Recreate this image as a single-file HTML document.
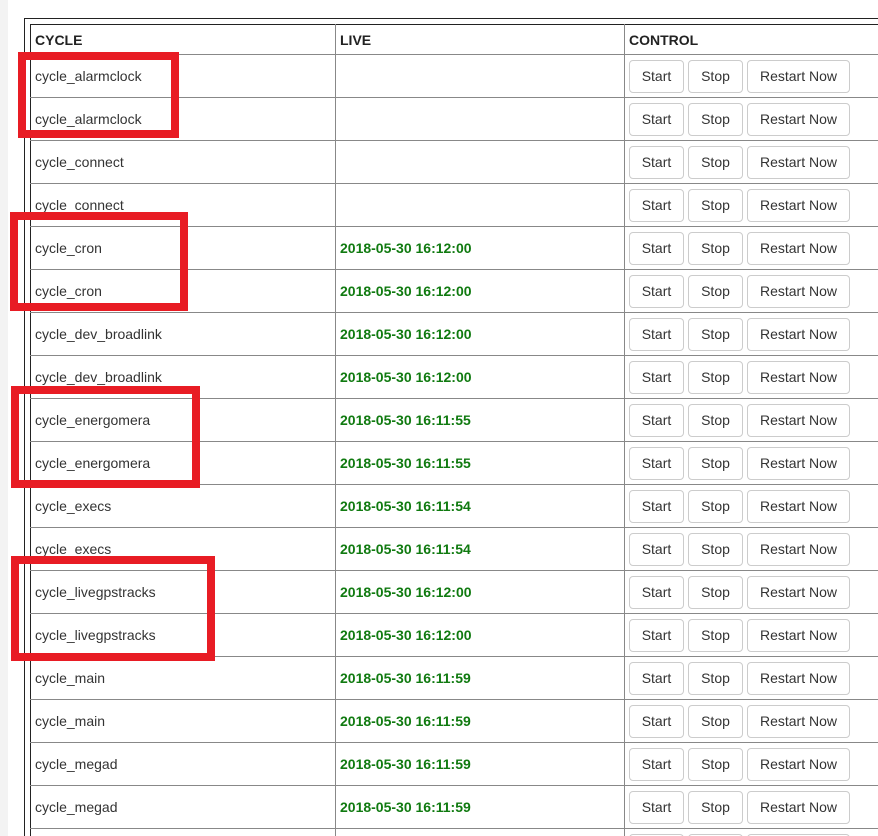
<!DOCTYPE html>
<html style="height:836px;overflow:hidden"><head><style>
body{margin:0;width:878px;height:836px;overflow:hidden;background:#fff;font-family:"Liberation Sans",Arial,sans-serif;font-size:14px;color:#333;position:relative}
.strip{position:absolute;left:0;top:0;width:8px;height:836px;background:#f3f3f3}
.outer{position:absolute;left:24px;top:18px;width:900px;height:900px;border-left:1px solid #222;border-top:1px solid #222}
table{position:absolute;left:30px;top:24px;border-collapse:collapse;width:900px;border-left:1px solid #222;border-top:1px solid #222}
td,th{border-bottom:1px solid #888;border-right:1px solid #888;padding:0 4px;height:42px;text-align:left;vertical-align:middle}
th{height:29px;font-weight:bold;font-size:14px;color:#222}
td.c1,th.c1{width:296px}
td.c2,th.c2{width:280px}
.d{color:#107a10;font-weight:bold}
.b{display:inline-block;border:1px solid #ccc;border-radius:4px;height:33px;line-height:31px;text-align:center;margin-right:4px;box-sizing:border-box;vertical-align:middle;color:#333}
.s{width:55px}.w{width:103px}
.r{position:absolute;border:8px solid #e81c24;box-sizing:border-box}
</style></head><body>
<div class="strip"></div>
<div class="outer"></div>
<table>
<tr><th class="c1">CYCLE</th><th class="c2">LIVE</th><th>CONTROL</th></tr>
<tr><td class="c1">cycle_alarmclock</td><td class="c2"></td><td><span class="b s">Start</span><span class="b s">Stop</span><span class="b w">Restart Now</span></td></tr>
<tr><td class="c1">cycle_alarmclock</td><td class="c2"></td><td><span class="b s">Start</span><span class="b s">Stop</span><span class="b w">Restart Now</span></td></tr>
<tr><td class="c1">cycle_connect</td><td class="c2"></td><td><span class="b s">Start</span><span class="b s">Stop</span><span class="b w">Restart Now</span></td></tr>
<tr><td class="c1">cycle_connect</td><td class="c2"></td><td><span class="b s">Start</span><span class="b s">Stop</span><span class="b w">Restart Now</span></td></tr>
<tr><td class="c1">cycle_cron</td><td class="c2 d">2018-05-30 16:12:00</td><td><span class="b s">Start</span><span class="b s">Stop</span><span class="b w">Restart Now</span></td></tr>
<tr><td class="c1">cycle_cron</td><td class="c2 d">2018-05-30 16:12:00</td><td><span class="b s">Start</span><span class="b s">Stop</span><span class="b w">Restart Now</span></td></tr>
<tr><td class="c1">cycle_dev_broadlink</td><td class="c2 d">2018-05-30 16:12:00</td><td><span class="b s">Start</span><span class="b s">Stop</span><span class="b w">Restart Now</span></td></tr>
<tr><td class="c1">cycle_dev_broadlink</td><td class="c2 d">2018-05-30 16:12:00</td><td><span class="b s">Start</span><span class="b s">Stop</span><span class="b w">Restart Now</span></td></tr>
<tr><td class="c1">cycle_energomera</td><td class="c2 d">2018-05-30 16:11:55</td><td><span class="b s">Start</span><span class="b s">Stop</span><span class="b w">Restart Now</span></td></tr>
<tr><td class="c1">cycle_energomera</td><td class="c2 d">2018-05-30 16:11:55</td><td><span class="b s">Start</span><span class="b s">Stop</span><span class="b w">Restart Now</span></td></tr>
<tr><td class="c1">cycle_execs</td><td class="c2 d">2018-05-30 16:11:54</td><td><span class="b s">Start</span><span class="b s">Stop</span><span class="b w">Restart Now</span></td></tr>
<tr><td class="c1">cycle_execs</td><td class="c2 d">2018-05-30 16:11:54</td><td><span class="b s">Start</span><span class="b s">Stop</span><span class="b w">Restart Now</span></td></tr>
<tr><td class="c1">cycle_livegpstracks</td><td class="c2 d">2018-05-30 16:12:00</td><td><span class="b s">Start</span><span class="b s">Stop</span><span class="b w">Restart Now</span></td></tr>
<tr><td class="c1">cycle_livegpstracks</td><td class="c2 d">2018-05-30 16:12:00</td><td><span class="b s">Start</span><span class="b s">Stop</span><span class="b w">Restart Now</span></td></tr>
<tr><td class="c1">cycle_main</td><td class="c2 d">2018-05-30 16:11:59</td><td><span class="b s">Start</span><span class="b s">Stop</span><span class="b w">Restart Now</span></td></tr>
<tr><td class="c1">cycle_main</td><td class="c2 d">2018-05-30 16:11:59</td><td><span class="b s">Start</span><span class="b s">Stop</span><span class="b w">Restart Now</span></td></tr>
<tr><td class="c1">cycle_megad</td><td class="c2 d">2018-05-30 16:11:59</td><td><span class="b s">Start</span><span class="b s">Stop</span><span class="b w">Restart Now</span></td></tr>
<tr><td class="c1">cycle_megad</td><td class="c2 d">2018-05-30 16:11:59</td><td><span class="b s">Start</span><span class="b s">Stop</span><span class="b w">Restart Now</span></td></tr>
<tr><td class="c1">cycle_mqtt</td><td class="c2 d">2018-05-30 16:11:59</td><td><span class="b s">Start</span><span class="b s">Stop</span><span class="b w">Restart Now</span></td></tr>
</table>
<div class="r" style="left:18px;top:52px;width:161px;height:86px"></div>
<div class="r" style="left:10px;top:212px;width:178px;height:99px"></div>
<div class="r" style="left:11px;top:386px;width:189px;height:102px"></div>
<div class="r" style="left:11px;top:556px;width:204px;height:105px"></div>
</body></html>
